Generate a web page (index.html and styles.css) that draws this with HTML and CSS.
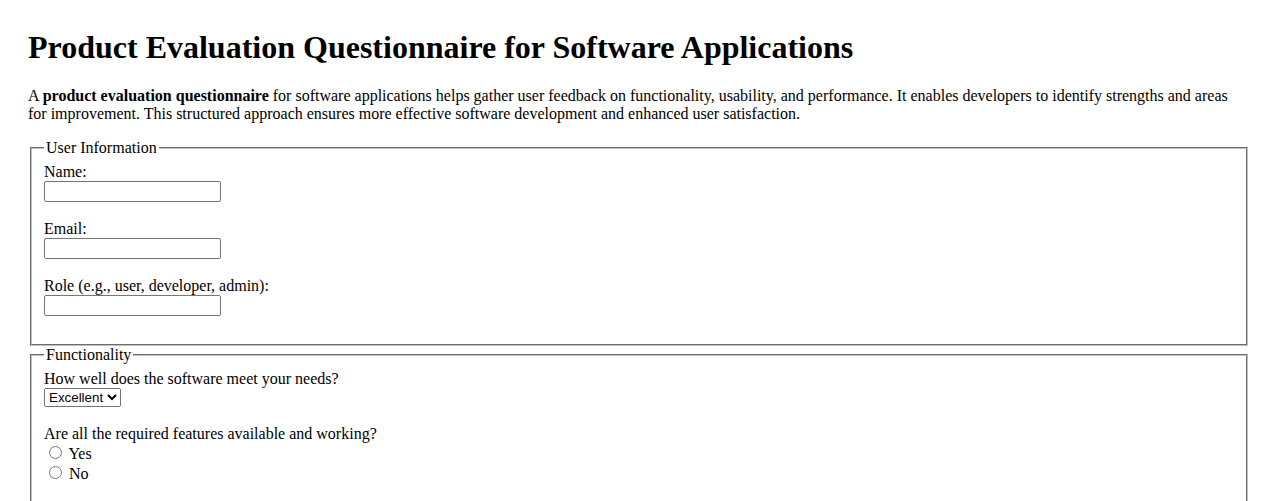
FILE: index.html
```html
<!DOCTYPE html>
<html lang="en">
<head>
<meta charset="utf-8">
<title>Product Evaluation Questionnaire for Software Applications</title>
<link rel="stylesheet" href="styles.css">
</head>
<body class="page">
<h1 class="title">Product Evaluation Questionnaire for Software Applications</h1>
<p class="intro">A <strong>product evaluation questionnaire</strong> for software applications helps gather user feedback on functionality, usability, and performance. It enables developers to identify strengths and areas for improvement. This structured approach ensures more effective software development and enhanced user satisfaction.</p>
<form class="form">
<fieldset class="group">
<legend class="legend">User Information</legend>
<label class="label" for="name">Name:</label><br>
<input class="text" type="text" id="name" name="name"><br><br>
<label class="label" for="email">Email:</label><br>
<input class="text" type="email" id="email" name="email"><br><br>
<label class="label" for="role">Role (e.g., user, developer, admin):</label><br>
<input class="text" type="text" id="role" name="role"><br><br>
</fieldset>
<fieldset class="group">
<legend class="legend">Functionality</legend>
<label class="label" for="needs">How well does the software meet your needs?</label><br>
<select class="select" id="needs" name="needs">
<option>Excellent</option>
<option>Good</option>
<option>Fair</option>
<option>Poor</option>
</select><br><br>
<label class="label">Are all the required features available and working?</label><br>
<input class="radio" type="radio" id="feat-yes" name="features" value="yes">
<label class="label" for="feat-yes">Yes</label><br>
<input class="radio" type="radio" id="feat-no" name="features" value="no">
<label class="label" for="feat-no">No</label><br><br>
</fieldset>
</form>
</body>
</html>
```

FILE: styles.css
```css
.page {
  margin: 0;
  padding: 29px 28px 28px;
  font-family: "Liberation Serif", "Times New Roman", serif;
  font-size: 16px;
  color: #000;
  background: #fff;
}

.title {
  font-size: 32px;
  font-weight: bold;
  margin: 0 0 21.44px;
}

.intro {
  margin: 16px 0;
}

.form {
  margin: 0;
}

.group {
  margin: 0 2px;
  padding: 0.35em 0.75em 0.625em;
  border: 2px groove rgb(192, 192, 192);
}

.legend {
  padding: 0 2px;
}

.text {
  box-sizing: border-box;
  width: 177px;
  height: 21px;
  margin: 0;
  padding: 1px 2px;
  border: 1px solid #767676;
  border-radius: 2px;
  font-family: "Liberation Sans", Arial, sans-serif;
  font-size: 13.333px;
}

.select {
  font-family: "Liberation Sans", Arial, sans-serif;
  font-size: 13.333px;
  margin: 0;
}

.radio {
  margin: 3px 3px 0 5px;
}
```
